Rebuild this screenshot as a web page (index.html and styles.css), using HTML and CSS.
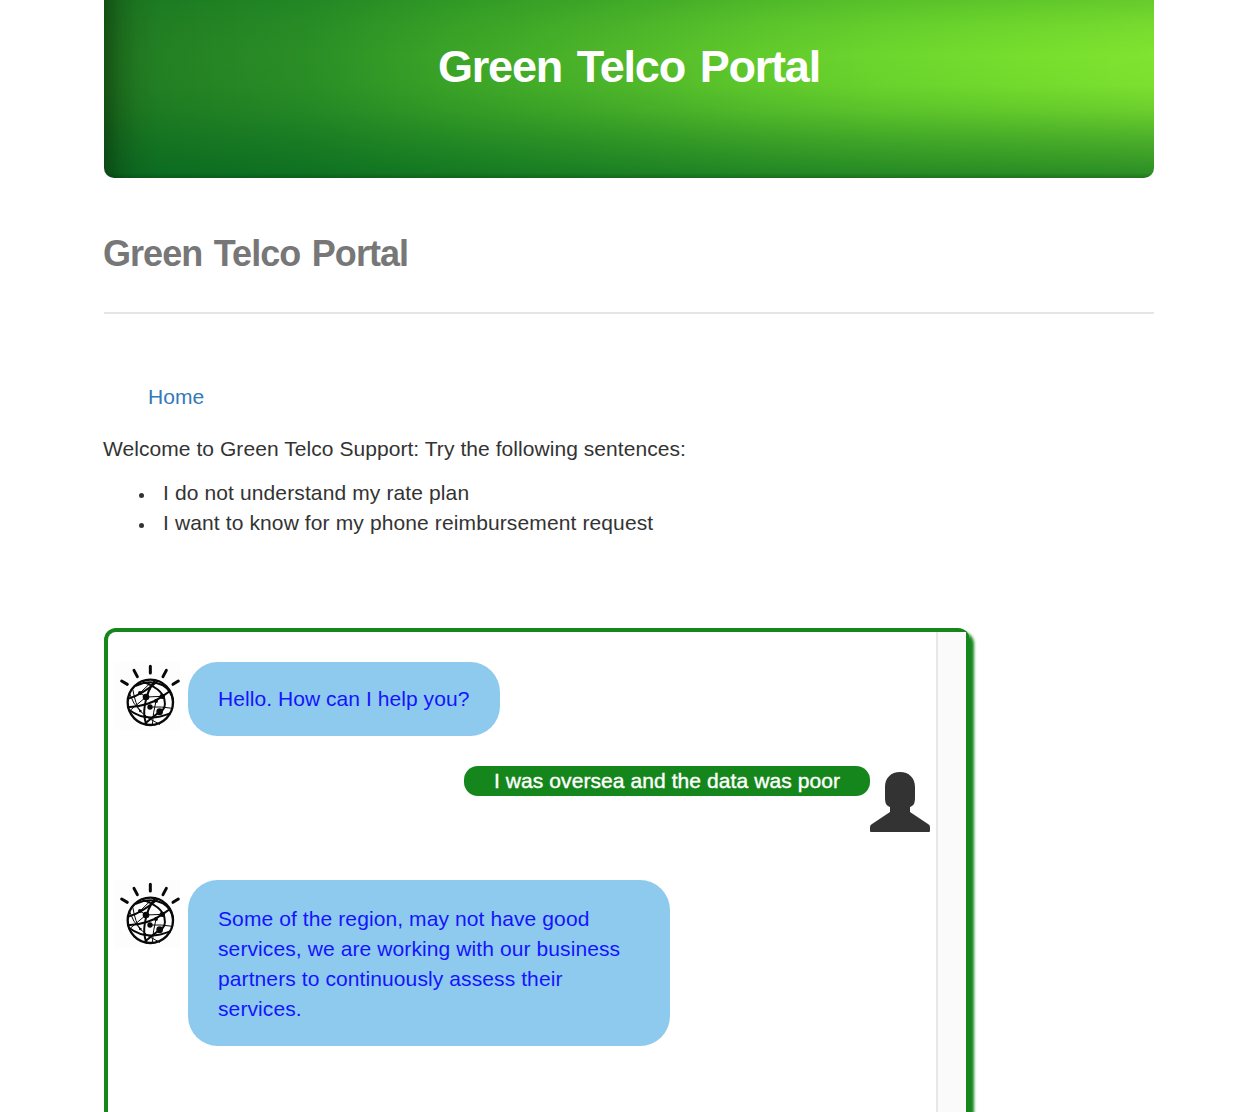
FILE: index.html
```
<!DOCTYPE html>
<html lang="en">
<head>
<meta charset="utf-8">
<title>Green Telco Portal</title>
<link rel="stylesheet" href="styles.css">
</head>
<body>
<svg class="defs" aria-hidden="true">
  <symbol id="bot" viewBox="0 0 216 228">
    <rect x="0" y="12" width="198" height="204" fill="#fdfdfd"/>
    <g fill="none" stroke="#080808" stroke-linecap="round">
      <path stroke-width="9" d="M109 25V45M60 37L70 56M157 37L147 56M23 69L40 79M193 69L177 79"/>
      <circle cx="109" cy="133" r="68" stroke-width="7"/>
      <g stroke-width="6">
        <path d="M67 83Q108 63 145 81Q172 98 177 126"/>
        <path d="M124 66Q98 98 92 145Q87 176 98 200"/>
        <path d="M42 148Q105 144 145 115L168 99"/>
        <path d="M43 122Q83 110 129 71"/>
        <path d="M46 156Q97 195 168 166"/>
        <path d="M85 71Q142 91 151 123Q158 155 137 161L91 198"/>
      </g>
      <g stroke-width="3">
        <path d="M47 108Q66 167 137 199"/>
        <path d="M96 117L145 115M78 105L109 75M78 105L96 117"/>
        <path d="M51 155L96 117M57 97Q64 140 79 159"/>
        <path d="M126 129Q117 164 115 200M126 129L145 115"/>
        <path d="M108 147Q142 145 176 151"/>
      </g>
    </g>
    <g fill="#080808">
      <circle cx="96" cy="117" r="10"/><circle cx="145" cy="115" r="8"/>
      <circle cx="108" cy="147" r="8"/><circle cx="137" cy="161" r="10"/>
      <circle cx="126" cy="129" r="6"/><circle cx="78" cy="105" r="6"/>
      <circle cx="79" cy="159" r="4"/>
    </g>
  </symbol>
</svg>
<div class="container">
  <header class="banner"><h1>Green Telco Portal</h1></header>
  <h2 class="title">Green Telco Portal</h2>
  <nav class="nav"><a href="#">Home</a></nav>
  <p class="intro">Welcome to Green Telco Support: Try the following sentences:</p>
  <ul class="samples">
    <li>I do not understand my rate plan</li>
    <li>I want to know for my phone reimbursement request</li>
  </ul>
  <section class="chat">
    <div class="messages">
      <div class="row">
        <svg class="bot"><use href="#bot"/></svg>
        <div class="bubble hello">Hello. How can I help you?</div>
      </div>
      <div class="row user">
        <div class="reply">I was oversea and the data was poor</div>
        <svg class="person" viewBox="0 0 60 60"><path fill="#333" d="M15 15C15 6 21 0 30 0S45 6 45 15V26C45 32 43 34 40 35V40L58 52Q60 53 60 55V59Q60 60 59 60H1Q0 60 0 59V55Q0 53 2 52L20 40V35C17 34 15 32 15 26Z"/></svg>
      </div>
      <div class="row">
        <svg class="bot"><use href="#bot"/></svg>
        <div class="bubble answer">Some of the region, may not have good<br>services, we are working with our business<br>partners to continuously assess their<br>services.</div>
      </div>
    </div>
    <div class="track"></div>
  </section>
</div>
</body>
</html>
```
FILE: styles.css
```
* { box-sizing: border-box; }
body {
  margin: 0;
  background: #fff;
  color: #333;
  font: 21px/30px "Liberation Sans", Arial, sans-serif;
  letter-spacing: .06px;
}
.defs { display: block; width: 0; height: 0; }
.container {
  display: flex;
  flex-direction: column;
  width: 1050px;
  height: 1112px;
  margin-left: 104px;
  overflow-x: visible;
  overflow-y: clip;
}
.banner {
  height: 178px;
  flex: none;
  padding-top: 37px;
  border-radius: 0 0 10px 10px;
  color: #fff;
  text-align: center;
  background:
    linear-gradient(to right, rgba(10, 40, 8, .5), rgba(10, 40, 8, .22) 16px, rgba(10, 40, 8, .06) 34px, transparent 54px),
    linear-gradient(to bottom, transparent 173px, rgba(0, 40, 0, .25) 178px),
    linear-gradient(to bottom, rgba(0, 105, 30, .2), rgba(0, 100, 30, .07) 25px, rgba(0, 100, 30, 0) 55px, rgba(0, 100, 30, .03) 85px, rgba(0, 98, 30, .16) 110px, rgba(0, 98, 32, .41) 140px, rgba(0, 98, 32, .66) 174px),
    linear-gradient(to right, #217a22, #2a8e26 200px, #3ba427 346px, #50b92a 524px, #62cb2c 660px, #6dd62d 780px, #75dd2d 900px, #80e430 1050px);
}
h1, h2 { margin: 0; font-weight: 700; }
h1 { font-size: 45px; line-height: 60px; letter-spacing: -1.2px; word-spacing: 3.4px; }
.title {
  height: 136px;
  flex: none;
  padding-top: 51px;
  border-bottom: 2px solid #e5e5e5;
  color: #777;
  font-size: 36px;
  line-height: 50px;
  letter-spacing: -.95px;
  word-spacing: 2.4px;
  text-indent: -1px;
}
.nav { padding: 68px 0 0 44px; }
.nav a { color: #337ab7; text-decoration: none; }
.intro { margin: 22px 0 14px; text-indent: -1px; }
.samples { margin: 0; padding-left: 52px; letter-spacing: .12px; }
.samples li { padding-left: 7px; }
.samples li::marker { font-size: 18px; }
.chat {
  display: flex;
  flex: 1;
  width: 866px;
  margin-top: 90px;
  border: 4px solid #15861b;
  border-bottom: 0;
  border-radius: 12px 12px 0 0;
  box-shadow: 4px 4px 3px #15861b;
}
.messages { flex: 1; padding-top: 26px; }
.track { width: 30px; background: #fafafa; border-left: 2px solid #e7e7e7; }
.row { display: flex; align-items: flex-start; }
.bot { width: 72px; height: 76px; margin-left: 6px; flex: none; }
.bubble {
  margin: 4px 0 0 2px;
  padding: 22px 30px;
  border-radius: 30px;
  background: #8ec9ee;
  color: #1414ff;
  white-space: nowrap;
}
.hello { width: 312px; }
.answer { width: 482px; padding: 24px 30px 22px; letter-spacing: .1px; }
.user { justify-content: flex-end; height: 66px; padding-right: 6px; margin: 30px 0 44px; }
.reply {
  width: 406px;
  height: 30px;
  border-radius: 14px;
  background: #15861b;
  color: #fff;
  text-align: center;
  white-space: nowrap;
  letter-spacing: .08px;
  -webkit-text-stroke: .4px #fff;
}
.person { width: 60px; height: 60px; margin-top: 6px; flex: none; }
```
